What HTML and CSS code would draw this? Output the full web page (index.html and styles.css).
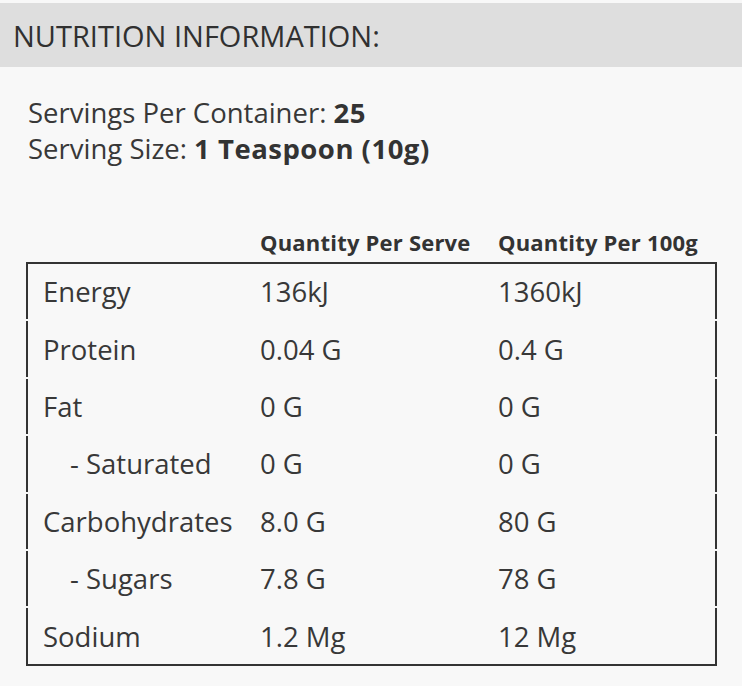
FILE: index.html
```html
<!DOCTYPE html>
<html lang="en">
<head>
<meta charset="utf-8">
<title>Nutrition Information</title>
<link rel="stylesheet" href="styles.css">
</head>
<body>
<div class="page">
  <h2 class="title">NUTRITION INFORMATION:</h2>
  <div class="info">
    <div>Servings Per Container: <strong>25</strong></div>
    <div>Serving Size: <strong>1 Teaspoon (10g)</strong></div>
  </div>
  <div class="facts">
    <div class="head">
      <div></div>
      <div>Quantity Per Serve</div>
      <div>Quantity Per 100g</div>
    </div>
    <div class="rows">
      <div class="row"><div class="label">Energy</div><div>136kJ</div><div>1360kJ</div></div>
      <div class="row"><div class="label">Protein</div><div>0.04 G</div><div>0.4 G</div></div>
      <div class="row"><div class="label">Fat</div><div>0 G</div><div>0 G</div></div>
      <div class="row"><div class="label sub">- Saturated</div><div>0 G</div><div>0 G</div></div>
      <div class="row"><div class="label">Carbohydrates</div><div>8.0 G</div><div>80 G</div></div>
      <div class="row"><div class="label sub">- Sugars</div><div>7.8 G</div><div>78 G</div></div>
      <div class="row"><div class="label">Sodium</div><div>1.2 Mg</div><div>12 Mg</div></div>
    </div>
  </div>
</div>
</body>
</html>
```

FILE: styles.css
```css
html, body {
  margin: 0;
  padding: 0;
  background: #f8f8f8;
}
body {
  font-family: "Open Sans", Lato, "Noto Sans", sans-serif;
  color: #333333;
}
.page {
  padding-top: 3px;
}
.title {
  margin: 0;
  height: 64px;
  display: flex;
  align-items: center;
  padding-left: 13px;
  background: #dedede;
  font-size: 29px;
  font-weight: 400;
  color: #303030;
}
.info {
  padding: 28px 0 0 28px;
  font-size: 27.5px;
  line-height: 36px;
  color: #383838;
}
.info strong {
  font-weight: 700;
  color: #333333;
  letter-spacing: 0.5px;
}
.facts {
  margin: 61px 25px 0 26px;
}
.head {
  display: grid;
  grid-template-columns: 234px 238px 1fr;
  font-size: 22px;
  font-weight: 700;
  line-height: 28px;
  padding-bottom: 6px;
  white-space: nowrap;
  letter-spacing: 0.2px;
}
.rows {
  display: flex;
  flex-direction: column;
  gap: 2px;
}
.row {
  display: grid;
  grid-template-columns: 232px 238px 1fr;
  align-items: center;
  height: 55.4px;
  border-left: 2px solid #333333;
  border-right: 2px solid #333333;
  font-size: 27.5px;
  color: #383838;
}
.row:first-child {
  border-top: 2px solid #333333;
}
.row:last-child {
  border-bottom: 2px solid #333333;
}
.label {
  padding-left: 15px;
  white-space: nowrap;
}
.label.sub {
  padding-left: 42px;
}
```
